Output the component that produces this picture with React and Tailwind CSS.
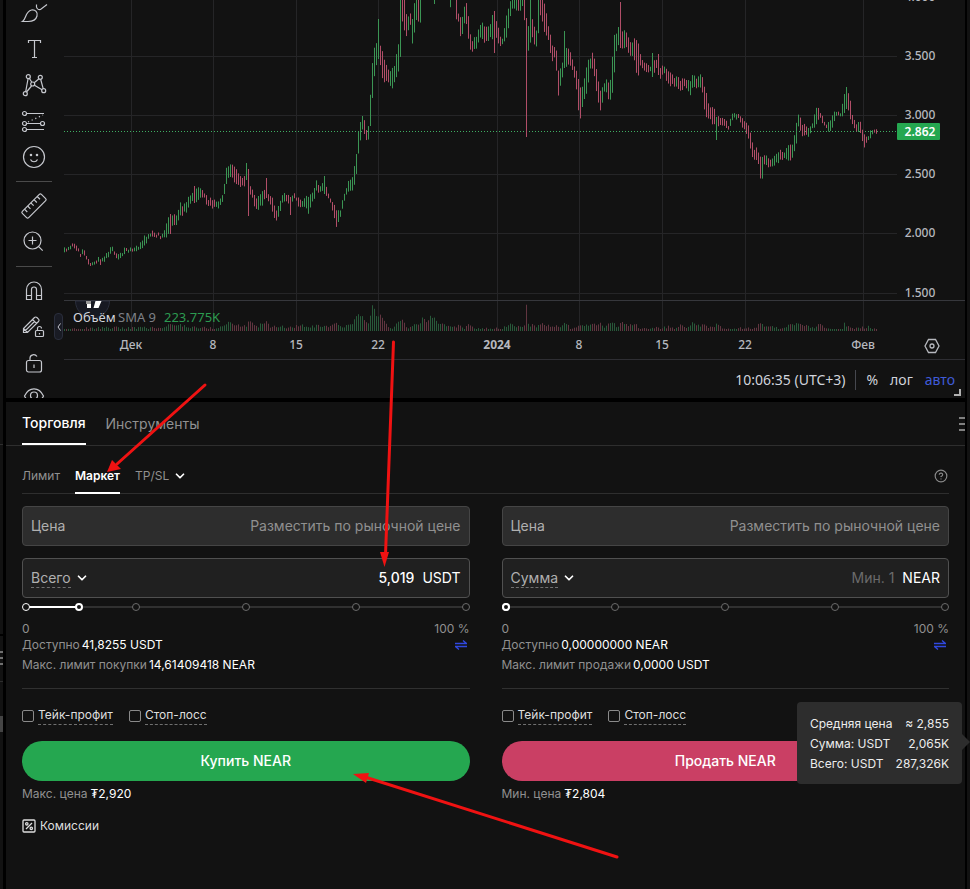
import React, { useState } from 'react';
import { ChevronDown, CircleHelp } from 'lucide-react';

// [x, high, low] of the price bars; bars between two points are interpolated
const PRICE_POINTS = [
  [64, 248, 255], [69, 246, 251], [73, 243, 248], [77, 247, 252], [80, 252, 258], [83, 249, 255], [87, 257, 263], [91, 262, 266],
  [97, 257, 262], [101, 260, 265], [105, 254, 260], [111, 246, 253], [115, 252, 257], [119, 254, 259], [123, 249, 255],
  [128, 247, 251], [137, 246, 251], [143, 237, 247], [150, 231, 237], [157, 232, 236], [163, 235, 239], [167, 217, 237],
  [171, 214, 226], [173, 212, 225], [177, 217, 227], [179, 197, 217], [183, 207, 215], [187, 197, 212], [191, 193, 204],
  [194, 189, 203], [200, 187, 200], [204, 191, 198], [207, 197, 207], [218, 199, 210], [223, 194, 200], [225, 172, 190],
  [227, 165, 180], [231, 161, 177], [235, 168, 185], [242, 177, 188], [245, 175, 188], [251, 186, 198], [257, 198, 213],
  [261, 191, 207], [265, 186, 198], [269, 195, 203], [273, 197, 217], [275, 212, 221], [279, 203, 218], [283, 192, 200],
  [288, 195, 205], [294, 192, 200], [300, 200, 209], [304, 197, 207], [308, 195, 213], [312, 192, 203], [316, 181, 193],
  [320, 184, 191], [324, 178, 194], [328, 192, 198], [333, 202, 213], [336, 210, 226], [340, 208, 217], [343, 196, 204],
  [348, 181, 192], [352, 175, 192], [355, 161, 183], [357, 142, 165], [359, 122, 145], [361, 121, 135], [363, 109, 129],
  [365, 127, 144], [367, 131, 141], [369, 116, 138], [371, 68, 117], [373, 53, 80], [375, 42, 71], [377, 43, 62],
  [379, 40, 59], [381, 46, 77], [383, 58, 83], [387, 67, 79], [391, 71, 91], [393, 65, 90], [395, 67, 79], [397, 38, 77],
  [399, 46, 66], [400, -5, 57], [402, -5, 22], [404, -5, 31], [406, 15, 36], [410, 13, 27], [412, 17, 43], [414, 3, 33],
  [416, -5, 20], [420, -5, 24], [422, -20, -5], [432, -20, -5], [436, -20, -5], [448, -20, -5], [450, -10, 8], [452, -20, -3],
  [454, -20, -1], [456, -5, 20], [458, 13, 24], [461, 19, 41], [463, 13, 28], [465, -5, 22], [467, 6, 32], [469, 25, 46],
  [471, 40, 53], [475, 35, 47], [477, 36, 51], [479, 23, 36], [485, 24, 44], [489, 26, 39], [493, 10, 40], [497, 21, 38],
  [499, 34, 47], [503, 39, 46], [505, 17, 41], [509, 2, 26], [511, -5, 7], [515, -5, 11], [517, -5, 15], [522, -5, 7],
  [524, -5, 22], [528, 27, 50], [530, -5, 42], [532, 20, 40], [536, 30, 47], [538, -5, 36], [540, -5, 17], [544, 2, 32],
  [548, 24, 42], [552, 43, 62], [554, 48, 58], [556, 49, 72], [558, 69, 95], [562, 62, 80], [566, 45, 68], [570, 53, 65],
  [575, 68, 82], [577, 72, 97], [579, 87, 124], [581, 87, 116], [583, 85, 103], [587, 58, 93], [589, 58, 70], [593, 51, 68],
  [597, 72, 98], [599, 90, 111], [601, 88, 112], [603, 85, 92], [607, 77, 95], [609, 85, 105], [611, 75, 93], [613, 34, 93],
  [615, 36, 54], [619, 23, 46], [623, 33, 53], [625, 27, 48], [631, 43, 57], [633, 36, 53], [635, 38, 72], [637, 38, 79],
  [640, 54, 68], [644, 62, 71], [650, 65, 74], [652, 56, 77], [656, 59, 69], [658, 56, 75], [660, 66, 79], [664, 65, 75],
  [668, 70, 86], [672, 75, 85], [676, 76, 88], [680, 78, 92], [684, 79, 87], [690, 80, 96], [693, 72, 86], [697, 77, 90],
  [701, 70, 87], [705, 90, 116], [709, 104, 121], [715, 110, 126], [719, 115, 126], [723, 118, 125], [728, 124, 131],
  [733, 110, 120], [739, 113, 121], [745, 120, 133], [749, 127, 142], [751, 137, 155], [753, 147, 163], [757, 148, 160],
  [760, 157, 178], [762, 154, 180], [764, 156, 166], [773, 158, 167], [779, 150, 163], [784, 152, 159], [788, 146, 162],
  [792, 144, 157], [796, 121, 146], [798, 115, 127], [802, 122, 137], [808, 127, 136], [813, 122, 128], [815, 108, 127],
  [819, 107, 118], [823, 120, 127], [827, 123, 132], [831, 117, 131], [837, 108, 116], [841, 113, 119], [843, 94, 117],
  [847, 91, 109], [849, 94, 117], [853, 119, 127], [857, 125, 136], [859, 117, 129], [863, 133, 147], [867, 137, 145],
  [871, 129, 137], [874, 127, 134], [878, 130, 134],
];

// single bars that stick out of the trend: [x, high, low, rising]
const SPIKES = [
  [171, 214, 234, false], [194, 186, 203, false], [247, 163, 180, true], [249, 169, 216, false], [267, 178, 198, false],
  [290, 197, 215, false], [324, 176, 194, true], [379, 19, 59, true], [434, -5, 4, true], [495, 11, 53, false],
  [526, 18, 137, false], [564, 31, 68, true], [621, 2, 48, false], [652, 53, 77, true], [658, 54, 75, false],
  [717, 117, 140, true], [847, 87, 109, true],
];

const VOLUME_POINTS = [
  [64, 2], [110, 3], [165, 3], [168, 6], [180, 6], [190, 4], [205, 3], [218, 3], [225, 6], [229, 10], [233, 6], [238, 6],
  [246, 4], [249, 13], [252, 7], [258, 5], [267, 10], [270, 4], [280, 5], [286, 3], [302, 6], [306, 3], [316, 5], [330, 4],
  [336, 7], [341, 3], [349, 7], [353, 7], [355, 15], [359, 16], [363, 16], [365, 8], [369, 8], [371, 22], [373, 27], [375, 18],
  [377, 12], [379, 20], [381, 14], [385, 7], [389, 4], [393, 3], [397, 8], [402, 11], [406, 4], [410, 3], [414, 6], [420, 7],
  [422, 14], [426, 8], [430, 16], [434, 13], [438, 6], [446, 6], [450, 4], [460, 5], [464, 3], [468, 6], [474, 2], [500, 2],
  [512, 7], [518, 4], [524, 5], [526, 25], [528, 6], [536, 5], [540, 8], [550, 4], [560, 5], [565, 9], [570, 2], [576, 3],
  [579, 7], [586, 5], [600, 7], [604, 4], [613, 9], [617, 4], [621, 11], [628, 4], [634, 8], [640, 2], [660, 3], [668, 4],
  [674, 2], [681, 6], [687, 3], [692, 8], [700, 5], [705, 6], [710, 3], [717, 7], [722, 2], [755, 3], [761, 9], [765, 3],
  [773, 5], [780, 2], [797, 8], [805, 5], [815, 2], [818, 8], [822, 7], [826, 2], [842, 2], [844, 7], [850, 3], [862, 3],
  [868, 5], [872, 2], [878, 2],
];

const lerp = (points, x, k) => {
  const i = Math.max(1, points.findIndex((p) => p[0] >= x));
  const a = points[i - 1];
  const b = points[i];
  return a[k] + ((b[k] - a[k]) * (x - a[0])) / (b[0] - a[0]);
};

const noise = (n) => {
  const s = Math.sin(n * 12.9898) * 43758.5453;
  return s - Math.floor(s);
};

const BARS = [];
for (let x = 64; x <= 877; x += 2) {
  const spike = SPIKES.find((s) => Math.abs(s[0] - x - 0.5) < 1);
  const high = spike ? spike[1] : lerp(PRICE_POINTS, x, 1) + noise(x) * 4 - 1;
  const low = spike ? spike[2] : lerp(PRICE_POINTS, x, 2) + noise(x + 1) * 4 - 3;
  const next = Math.min(x + 2, 878);
  const trend = lerp(PRICE_POINTS, Math.max(x - 2, 64), 1) - lerp(PRICE_POINTS, next, 1);
  BARS.push({
    x: x + 0.5,
    high,
    low: Math.max(low, high + 3),
    rising: spike ? spike[3] : trend + noise(x + 7) * 8 - 4 > 0,
    volume: Math.max(2, lerp(VOLUME_POINTS, x, 1) + noise(x + 3) * 3 - 1.5),
  });
}

const DATES = [
  [131, 'Дек'], [213, '8'], [296, '15'], [378, '22'], [497, '2024'], [579, '8'], [662, '15'], [745, '22'], [863, 'Фев'],
];
const PRICES = [[-3, '4.000'], [56, '3.500'], [115, '3.000'], [174, '2.500'], [233, '2.000'], [293, '1.500']];

const Chart = () => (
  <svg viewBox="64 0 901 359" className="block w-full font-['Noto_Sans',sans-serif]" role="img" aria-label="NEAR/USDT">
    <g stroke="#252527" strokeWidth="1">
      {DATES.map(([x]) => <path key={x} d={`M${x + 0.5} 0V331`} />)}
      {PRICES.map(([y]) => <path key={y} d={`M64 ${y + 0.5}H897`} />)}
    </g>
    <path d="M64 300.5H965" stroke="#36373c" />
    <path d="M64 131.5H897" stroke="#3fae62" strokeDasharray="1 2" shapeRendering="crispEdges" />

    <g strokeWidth="1">
      {BARS.map((b) => (
        <path key={b.x} d={`M${b.x} ${b.high}V${b.low}`} stroke={b.rising ? '#3b9554' : '#b14e68'} />
      ))}
      {BARS.map((b) => (
        <path key={b.x} d={`M${b.x} 331V${331 - b.volume}`} stroke={b.rising ? '#28593a' : '#613540'} />
      ))}
    </g>

    <path d="M75.5 301a17 17 0 0 0 34 0Z" fill="#171922" stroke="#2a2e3c" />
    <path d="M87 301h4v7h-4zM95.500 301h6l-3 7h-5z" fill="#fff" />
    <path d="M86 301h5v3h-5z" fill="#999" />
    <text x="73" y="322" fontSize="13" fill="#d1d4dc">Объём</text>
    <text x="118" y="322" fontSize="13" fill="#7d8087">SMA 9</text>
    <text x="164" y="322" fontSize="13" fill="#2c9a50">223.775K</text>

    <g fontSize="12" fontWeight="500" fill="#b6b8be" textAnchor="middle">
      {DATES.map(([x, label]) => (
        <text key={x} x={x} y="349" fontWeight={label === '2024' ? 700 : 500}>{label}</text>
      ))}
      {PRICES.map(([y, label]) => <text key={y} x="920" y={y + 4}>{label}</text>)}
    </g>
    <rect x="897" y="123" width="43" height="17" rx="1" fill="#25a750" />
    <text x="920" y="136" fontSize="12" fontWeight="600" fill="#fff" textAnchor="middle">2.862</text>

    <path d="M928.500 339.500h7l3.500 6.500-3.500 6.500h-7L925 346z" fill="none" stroke="#b6b8be" strokeWidth="1.300" />
    <circle cx="932" cy="346" r="2" fill="none" stroke="#b6b8be" strokeWidth="1.300" />
  </svg>
);

const ToolIcon = ({ children }) => (
  <svg viewBox="0 0 28 28" className="w-7 h-7" fill="none" stroke="currentColor" strokeWidth="1.200">{children}</svg>
);

const TOOLS = [
  {
    name: 'Кисть',
    icon: <path d="M2.500 22.500C6.500 20 5 12.500 11.500 11c4-.6 6.500 2.500 5.500 6-1 4-5 5.500-9 5.500zM16.500 5.500c-.5 3.500 1 5.500 4 5L27 5.500" />,
  },
  { name: 'Текст', icon: <path d="M8.500 8V5.500h12V8M14.500 5.500v17M12 22.500h5" /> },
  {
    name: 'Паттерны',
    icon: (
      <>
        <path d="M5.700 20.700 8 8M9.500 7.500l2.300 3.700M6.500 21l5-6M14.200 11.800l4.800-4M14.500 14.200l7.500 4.600M20.700 8.500l2.500 9.200" />
        <circle cx="8.300" cy="5.700" r="2" /><circle cx="20.300" cy="6.300" r="2" /><circle cx="12.700" cy="13" r="2" />
        <circle cx="5.300" cy="22.700" r="2" /><circle cx="23.700" cy="19.700" r="2" />
      </>
    ),
  },
  {
    name: 'Прогноз',
    icon: (
      <>
        <path d="M6.500 6.500H24M6.500 16.500h13.500M6.500 22.500H24" />
        <path d="M8 15 23 8" strokeDasharray="1.200 2.800" />
        <circle cx="4.500" cy="6.500" r="2" /><circle cx="4.500" cy="16.500" r="2" /><circle cx="22.500" cy="16.500" r="2" /><circle cx="4.500" cy="22.500" r="2" />
      </>
    ),
  },
  {
    name: 'Эмодзи',
    icon: (
      <>
        <circle cx="14" cy="14" r="10.500" />
        <path d="M10.500 16.500c1.500 3 5.500 3 7 0" />
        <circle cx="11" cy="12" r=".7" fill="currentColor" /><circle cx="17" cy="12" r=".7" fill="currentColor" />
      </>
    ),
  },
  { divider: true, name: 'd1' },
  {
    name: 'Линейка',
    icon: (
      <g transform="rotate(-45 14 14)">
        <rect x="0.500" y="9.500" width="27" height="9" rx="1.500" />
        <path d="M5 9.500v4M9.500 9.500v4M14 9.500v4M18.500 9.500v4M23 9.500v4" />
      </g>
    ),
  },
  {
    name: 'Приблизить',
    icon: <><circle cx="12.500" cy="12.500" r="8.500" /><path d="m18.700 18.700 4 4M8.500 12.500h8M12.500 8.500v8" /></>,
  },
  { divider: true, name: 'd2' },
  {
    name: 'Магнит',
    icon: <path d="M6.500 22.500V12.500a7.500 7.500 0 0 1 15 0v10h-5V12.500a2.500 2.500 0 0 0-5 0v10zM6.500 18.500h5M16.500 18.500h5" />,
  },
  {
    name: 'Режим рисования',
    icon: (
      <>
        <path d="M3.500 19.500v-4L14.500 4.500c.7-.7 1.700-.7 2.400 0l1.600 1.600c.7.7.7 1.700 0 2.400L7.500 19.500zM3.500 15.500l4 4M12.500 6.500l4 4M5.500 17.500l9-9" />
        <rect x="15.500" y="17.500" width="8" height="6" rx="1" /><path d="M17.500 17.500v-2a2 2 0 0 1 4 0M19.500 20v1.500" />
      </>
    ),
  },
  {
    name: 'Закрепить',
    icon: <><rect x="6.500" y="11.500" width="15" height="11.500" rx="2" /><path d="M10 11.500V9c0-3.500 5-4.500 7-1.500M14 15.500v3.500" /></>,
  },
  {
    name: 'Скрыть',
    icon: <><path d="M4.500 11C9 1.500 19 1.500 23.500 11 19 20 9 20 4.500 11z" /><circle cx="14" cy="10.500" r="3.500" /></>,
  },
];

const Toolbar = () => (
  <aside className="w-[58px] shrink-0 text-[#c6c8ce]">
    <div className="-mt-[5px] flex flex-col">
      {TOOLS.map((tool) => tool.divider ? (
        <div key={tool.name} className="h-px ml-2.5 mr-3 my-1.5 bg-[#4a4a4a]" />
      ) : (
        <button key={tool.name} aria-label={tool.name} className="h-9 w-14 flex items-center justify-center">
          <ToolIcon>{tool.icon}</ToolIcon>
        </button>
      ))}
    </div>
  </aside>
);

const PercentSlider = ({ value, onChange, label }) => (
  <div className="relative h-[18px] mx-1">
    <div className="absolute left-0 right-0 top-2 h-[2px] bg-[#303030]" />
    <div className="absolute left-0 top-2 h-[2px] bg-white" style={{ width: `${value}%` }} />
    {[0, 25, 50, 75, 100].map((stop) => (
      <span
        key={stop}
        style={{ left: `${stop}%` }}
        className={`absolute top-[5px] size-2 -ml-1 rounded-full border bg-[#121212] ${stop <= value ? 'border-white' : 'border-[#6b6b6b]'}`}
      />
    ))}
    <span
      style={{ left: `${value}%` }}
      className="absolute top-[5px] size-2 -ml-1 rounded-full border-2 border-white bg-[#121212]"
    />
    <input type="range" min="0" max="100" value={value} onChange={(e) => onChange(Number(e.target.value))}
      aria-label={label} className="absolute inset-0 w-full h-full opacity-0 cursor-pointer" />
  </div>
);

const TransferIcon = () => (
  <svg viewBox="0 0 12 10" className="w-3 h-2.5" fill="none" stroke="#3048e0" strokeWidth="1.300">
    <path d="M0 3.500h11.500L8 .5M12 6.500H.5L4 9.500" />
  </svg>
);

const OrderForm = ({ side, field, options, amount, placeholder, unit, percent, available, limitLabel, limit, action, color, priceLabel, price }) => {
  const [value, setValue] = useState(amount);
  const [share, setShare] = useState(percent);

  return (
    <form className="flex-1 min-w-0 text-xs" onSubmit={(e) => e.preventDefault()}>
      <label className="flex items-center h-10 px-2 rounded border border-[#454545] bg-[#2d2d2d] text-sm">
        <span className="text-[#b0b0b0]">Цена</span>
        <input disabled value="Разместить по рыночной цене" readOnly
          className="flex-1 min-w-0 text-right text-[#909090] bg-transparent" />
      </label>

      <div className="flex items-center h-10 mt-3 px-2 rounded border border-[#505050] bg-[#202020] text-sm">
        <select aria-label="Тип суммы" className="appearance-none field-sizing-content bg-transparent text-[#b0b0b0] border-b border-dashed border-[#707070] leading-[18px]">
          {options.map((o) => <option key={o}>{o}</option>)}
        </select>
        <ChevronDown className="w-3.5 h-3.5 ml-1 text-white" strokeWidth={3} />
        <input aria-label={field} value={value} placeholder={placeholder} onChange={(e) => setValue(e.target.value)}
          className="flex-1 min-w-0 text-right text-white placeholder:text-[#6b6b6b] bg-transparent font-medium placeholder:font-normal outline-none" />
        <span className="ml-2 text-white">{unit}</span>
      </div>

      <PercentSlider value={share} onChange={setShare} label={`${side}, %`} />
      <div className="flex justify-between mt-[3px] leading-5 text-[#909090]">
        <span>0</span>
        <span>100 %</span>
      </div>

      <div className="-mt-1 flex justify-between items-center pr-[3px] leading-5">
        <p className="flex gap-0.5 text-[#909090]">Доступно <span className="text-white">{available}</span></p>
        <button aria-label="Перевод"><TransferIcon /></button>
      </div>
      <p className="flex gap-0.5 leading-5 text-[#909090]">{limitLabel} <span className="text-white">{limit}</span></p>

      <div className="mt-[13px] pt-[17px] flex gap-4 border-t border-[#303030] leading-5">
        {['Тейк-профит', 'Стоп-лосс'].map((name) => (
          <label key={name} className="flex items-center gap-1 pb-1">
            <input type="checkbox" className="appearance-none size-3 rounded-[2px] border border-[#8a8a8a] checked:bg-white" />
            <span className="border-b border-dashed border-[#707070] leading-[18px] text-[#dedede]">{name}</span>
          </label>
        ))}
      </div>

      <button className={`w-full h-10 mt-3 rounded-full text-sm font-medium text-white ${color}`}>{action}</button>
      <p className="mt-[3px] flex gap-[3px] leading-5 text-[#909090]">{priceLabel} <span className="text-white">{price}</span></p>
    </form>
  );
};

const TradePanel = () => (
  <section className="relative flex-1 bg-[#121212]">
    <nav className="flex justify-between items-start h-11 pl-4 border-b border-[#2e2e2e]">
      <div className="flex gap-5 text-sm">
        <button className="h-[43px] border-b-2 border-white text-white font-medium">Торговля</button>
        <button className="h-[43px] text-[#909090]">Инструменты</button>
      </div>
      <button aria-label="Меню" className="mt-[15px] w-1.5 flex flex-col gap-1">
        <span className="h-[2px] bg-[#808080]" />
        <span className="h-[2px] bg-[#808080]" />
        <span className="h-[2px] bg-[#808080]" />
      </button>
    </nav>

    <div className="px-4">
      <div className="mt-3 h-9 flex items-center justify-between border-b border-[#2e2e2e] text-xs text-[#909090]">
        <div className="flex gap-[15px]">
          <button className="h-9">Лимит</button>
          <button className="h-9 pt-[2px] border-b-2 border-white text-white font-semibold">Маркет</button>
          <button className="h-9 flex items-center gap-1">
            TP/SL
            <ChevronDown className="w-3.5 h-3.5 text-white" strokeWidth={3} />
          </button>
        </div>
        <button aria-label="Справка" className="mr-px"><CircleHelp className="w-3.5 h-3.5 text-[#8a8a8a]" strokeWidth={2} /></button>
      </div>

      <div className="mt-3 flex gap-8">
        <OrderForm side="Купить" field="Всего" options={['Всего', 'Сумма']} amount="5,019" placeholder="Мин. 1" unit="USDT"
          percent={12} available="41,8255 USDT" limitLabel="Макс. лимит покупки" limit="14,61409418 NEAR"
          action="Купить NEAR" color="bg-[#25a750]" priceLabel="Макс. цена" price="₮2,920" />
        <OrderForm side="Продать" field="Сумма" options={['Сумма', 'Всего']} amount="" placeholder="Мин. 1" unit="NEAR"
          percent={0} available="0,00000000 NEAR" limitLabel="Макс. лимит продажи" limit="0,0000 USDT"
          action="Продать NEAR" color="bg-[#ca3f64]" priceLabel="Мин. цена" price="₮2,804" />
      </div>

      <a href="#fees" className="mt-3 inline-flex items-center gap-1 text-xs leading-5 text-[#dedede]">
        <svg viewBox="0 0 14 14" className="w-3.5 h-3.5" fill="none" stroke="currentColor" strokeWidth="1.300">
          <rect x="1" y="1" width="12" height="12" rx="1" />
          <path d="m4 10 6-6" />
          <circle cx="4.800" cy="4.800" r="1.200" /><circle cx="9.300" cy="9.300" r="1.200" />
        </svg>
        Комиссии
      </a>
    </div>

    <div role="tooltip" className="absolute top-[300px] right-[3px] w-[165px] px-[13px] pt-3 pb-2.5 rounded bg-[#2d2d2d] text-xs leading-5 text-[#ececec]">
      <dl>
        <div className="flex justify-between"><dt>Средняя цена</dt><dd>≈ 2,855</dd></div>
        <div className="flex justify-between"><dt>Сумма: USDT</dt><dd>2,065K</dd></div>
        <div className="flex justify-between"><dt>Всего: USDT</dt><dd>287,326K</dd></div>
      </dl>
      <svg viewBox="0 0 8 16" className="absolute -right-2 top-8 w-2 h-4"><path d="M0 0l8 8-8 8z" fill="#2d2d2d" /></svg>
    </div>
  </section>
);

const ChartPanel = () => (
  <section className="relative flex h-[398px] overflow-hidden bg-[#121212]">
    <Toolbar />
    <div className="flex-1 min-w-0">
      <Chart />
      <div className="h-10 pr-2.5 flex items-center justify-end border-t border-[#2e2e33] text-sm text-[#d1d4dc] font-['Noto_Sans',sans-serif]">
        <button>10:06:35 (UTC+3)</button>
        <span className="w-px h-5 mx-2.5 bg-[#46484f]" />
        <button>%</button>
        <button className="mx-3">лог</button>
        <button className="text-[#3f5bd8]">авто</button>
      </div>
    </div>
    <button aria-label="Свернуть панель" className="absolute left-12 top-[313px] w-[9px] h-[27px] flex items-center justify-center rounded-sm border border-[#2a2e3c] bg-[#191b24] text-[#c6c8ce]">
      <svg viewBox="0 0 4 8" className="w-1 h-2" fill="none" stroke="currentColor"><path d="M3.500.5 1 4l2.500 3.500" /></svg>
    </button>
    <span className="absolute right-1 bottom-0.5 w-[7px] h-[7px] border-r-2 border-b-2 border-[#b0b0b0]" />
  </section>
);

// Arrows that point out the order steps
const Arrows = () => (
  <svg viewBox="0 0 970 889" className="absolute inset-x-0 top-0 w-full pointer-events-none" stroke="#f01212" fill="#f01212">
    <g strokeWidth="3" strokeLinecap="round">
      <path d="M205 385 117 464" />
      <path d="M393.500 342 385.500 555" />
      <path d="m617 857-252-80" />
    </g>
    <g stroke="none">
      <path d="m107 472 5-12 9 9z" />
      <path d="m384.500 567-4.500-15h9z" />
      <path d="m353 774 16-1-3 10z" />
    </g>
  </svg>
);

export default function App() {
  return (
    <div className="relative flex min-h-[889px] overflow-hidden bg-black font-['Inter','Noto_Sans',sans-serif]">
      <div className="w-[3px] mr-[3px] flex flex-col bg-[#121212]">
        <div className="h-[445px] border-b border-[#2e2e2e]" />
        <div className="h-[191px] border-b-2 border-black" />
        <div className="mt-[15px] h-[2px] bg-[#707070]" />
        <div className="mt-1 h-[2px] bg-[#707070]" />
        <div className="mt-1 h-[2px] bg-[#707070]" />
        <div className="mt-4 h-px bg-[#2e2e2e]" />
        <div className="mt-[34px] h-4 bg-[#444]" />
      </div>
      <main className="flex-1 min-w-0 flex flex-col gap-1">
        <ChartPanel />
        <TradePanel />
      </main>
      <div className="w-[3px] ml-[2px] bg-[#121212]" />
      <Arrows />
    </div>
  );
}
